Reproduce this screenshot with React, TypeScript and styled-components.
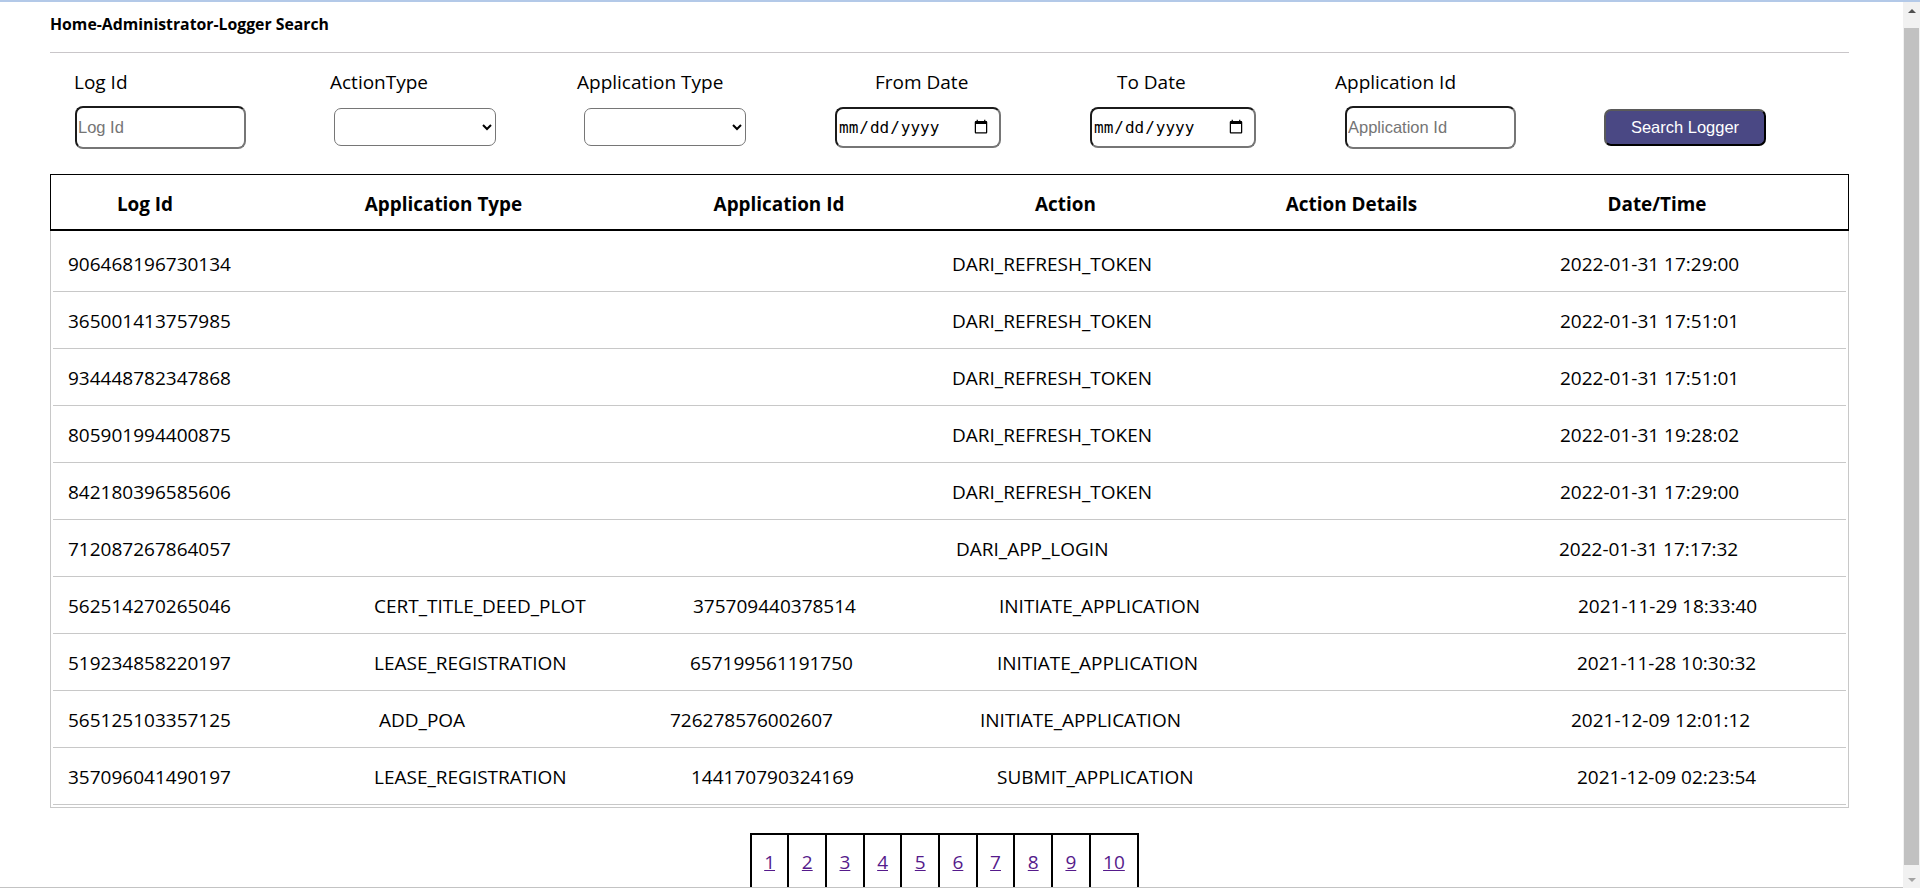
import React from "react";
import styled, { createGlobalStyle } from "styled-components";

const GlobalStyle = createGlobalStyle`
  html {
    scrollbar-width: none;
  }
  html, body {
    margin: 0;
    padding: 0;
    background: #ffffff;
  }
  body {
    font-family: "Open Sans", "Noto Sans", sans-serif;
    color: #000;
  }
  ::-webkit-scrollbar {
    display: none;
  }
`;

const TopEdge = styled.div`
  position: fixed;
  top: 0;
  left: 0;
  right: 0;
  height: 2px;
  background: #b3c9e8;
  z-index: 5;
`;

const BottomEdge = styled.div`
  position: fixed;
  bottom: 0;
  left: 0;
  right: 0;
  height: 1px;
  background: #c3c3c3;
  z-index: 5;
`;

const ScrollBar = styled.div`
  position: fixed;
  top: 2px;
  right: 0;
  bottom: 0;
  width: 17px;
  display: flex;
  flex-direction: column;
  background: #f1f1f1;
  z-index: 6;
`;

const ScrollArrow = styled.div<{ $down?: boolean }>`
  flex: 0 0 17px;
  display: flex;
  align-items: center;
  justify-content: center;
  &::before {
    content: "";
    width: 0;
    height: 0;
    border-left: 4px solid transparent;
    border-right: 4px solid transparent;
    ${(p) =>
      p.$down
        ? "border-top: 4px solid #a3a3a3;"
        : "border-bottom: 4px solid #505050;"}
  }
`;

const ScrollTrack = styled.div`
  flex: 1;
  display: flex;
  flex-direction: column;
  padding: 9px 1px 6px 1px;
`;

const ScrollThumb = styled.div`
  flex: 1;
  background: #c1c1c1;
`;

const Page = styled.div`
  padding: 0 0 14px 50px;
  width: 1799px;
`;

const Title = styled.h1`
  margin: 0;
  padding-top: 14px;
  font-size: 15.8px;
  line-height: 20px;
  font-weight: 700;
  white-space: nowrap;
`;

const Divider = styled.hr`
  margin: 18px 0 0;
  border: 0;
  height: 1px;
  background: #c9c6c9;
`;

const FilterBar = styled.div`
  display: grid;
  grid-template-columns: 256px 236px 269px 255px 245px 269px auto;
  padding-left: 24px;
  margin-top: 16px;
`;

const Field = styled.div`
  display: flex;
  flex-direction: column;
  gap: 10px;
`;

const FieldLabel = styled.label<{ $indent: number }>`
  display: block;
  height: 26px;
  padding-left: ${(p) => p.$indent}px;
  font-size: 19px;
  line-height: 26px;
  white-space: nowrap;
`;

const ControlSlot = styled.div<{ $indent: number }>`
  display: flex;
  align-items: center;
  height: 44px;
  padding-left: ${(p) => p.$indent}px;
`;

const TextInput = styled.input`
  box-sizing: border-box;
  width: 171px;
  height: 43px;
  padding: 0 1px;
  border: 2px solid;
  border-color: #1b1b1b #767676 #767676 #1b1b1b;
  border-radius: 8px;
  font-family: "Liberation Sans", Arial, sans-serif;
  font-size: 16.5px;
  color: #000;
  background: #fff;
  outline: none;
  &::placeholder {
    color: #757575;
  }
`;

const SelectBox = styled.select`
  box-sizing: border-box;
  width: 162px;
  height: 38px;
  border: 1px solid #767676;
  border-radius: 7px;
  background-color: #fff;
  font-family: "Liberation Sans", Arial, sans-serif;
  font-size: 16px;
`;

const DateInput = styled.input`
  box-sizing: border-box;
  width: 166px;
  height: 41px;
  padding: 0 8px 0 1px;
  border: 2px solid;
  border-color: #1b1b1b #767676 #767676 #1b1b1b;
  border-radius: 8px;
  font-family: "DejaVu Sans Mono", "Liberation Mono", monospace;
  font-size: 16px;
  color: #000;
  background: #fff;
`;

const SearchButton = styled.button`
  box-sizing: border-box;
  width: 162px;
  height: 37px;
  border: 2px solid;
  border-color: #5a5a5a #000 #000 #5a5a5a;
  border-radius: 7px;
  background: #4a4884;
  color: #fff;
  font-family: "Liberation Sans", Arial, sans-serif;
  font-size: 16.5px;
  cursor: pointer;
`;

const Table = styled.div`
  margin-top: 25px;
`;

const HeaderRow = styled.div`
  display: grid;
  grid-template-columns: 188px 409px 262px 311px 261px 350px 1fr;
  height: 54px;
  border: 1px solid #000;
  border-bottom-width: 2px;
`;

const HeaderCell = styled.div`
  padding-top: 17px;
  font-size: 18.9px;
  line-height: 25px;
  font-weight: 700;
  text-align: center;
  white-space: nowrap;
`;

const Body = styled.div`
  border: 1px solid #c8c8c8;
  border-top: 0;
  padding: 4px 2px 2px 2px;
`;

const Row = styled.div<{ $template: string; $offset: number }>`
  display: grid;
  grid-template-columns: ${(p) => p.$template};
  height: 56px;
  padding-left: ${(p) => p.$offset}px;
  border-bottom: 1px solid #c8c8c8;
`;

const Cell = styled.div`
  padding-top: 17px;
  font-size: 19px;
  line-height: 25px;
  white-space: nowrap;
`;

const PagerWrap = styled.div`
  display: flex;
  justify-content: center;
  margin-top: 25px;
  padding-right: 10px;
`;

const Pager = styled.div`
  display: flex;
  border: 1px solid #000;
`;

const PageCell = styled.div`
  border: 1px solid #000;
  padding: 15px 12.4px;
  font-size: 19px;
  line-height: 25px;
`;

const PageLink = styled.a`
  color: #551a8b;
  text-decoration: underline;
`;

type Filter = {
  label: string;
  labelIndent: number;
  controlIndent: number;
  kind: "text" | "select" | "date";
  placeholder?: string;
};

const filters: Filter[] = [
  { label: "Log Id", labelIndent: 0, controlIndent: 1, kind: "text", placeholder: "Log Id" },
  { label: "ActionType", labelIndent: 0, controlIndent: 4, kind: "select" },
  { label: "Application Type", labelIndent: 11, controlIndent: 18, kind: "select" },
  { label: "From Date", labelIndent: 40, controlIndent: 0, kind: "date" },
  { label: "To Date", labelIndent: 27, controlIndent: 0, kind: "date" },
  { label: "Application Id", labelIndent: 0, controlIndent: 10, kind: "text", placeholder: "Application Id" },
];

const headers = ["Log Id", "Application Type", "Application Id", "Action", "Action Details", "Date/Time"];

type LogRow = {
  cells: string[];
  x: number[];
};

const refreshX = [68, 374, 692, 952, 1300, 1560];

const rows: LogRow[] = [
  { cells: ["906468196730134", "", "", "DARI_REFRESH_TOKEN", "", "2022-01-31 17:29:00"], x: refreshX },
  { cells: ["365001413757985", "", "", "DARI_REFRESH_TOKEN", "", "2022-01-31 17:51:01"], x: refreshX },
  { cells: ["934448782347868", "", "", "DARI_REFRESH_TOKEN", "", "2022-01-31 17:51:01"], x: refreshX },
  { cells: ["805901994400875", "", "", "DARI_REFRESH_TOKEN", "", "2022-01-31 19:28:02"], x: refreshX },
  { cells: ["842180396585606", "", "", "DARI_REFRESH_TOKEN", "", "2022-01-31 17:29:00"], x: refreshX },
  { cells: ["712087267864057", "", "", "DARI_APP_LOGIN", "", "2022-01-31 17:17:32"], x: [68, 374, 692, 956, 1300, 1559] },
  {
    cells: ["562514270265046", "CERT_TITLE_DEED_PLOT", "375709440378514", "INITIATE_APPLICATION", "", "2021-11-29 18:33:40"],
    x: [68, 374, 693, 999, 1300, 1578],
  },
  {
    cells: ["519234858220197", "LEASE_REGISTRATION", "657199561191750", "INITIATE_APPLICATION", "", "2021-11-28 10:30:32"],
    x: [68, 374, 690, 997, 1300, 1577],
  },
  {
    cells: ["565125103357125", "ADD_POA", "726278576002607", "INITIATE_APPLICATION", "", "2021-12-09 12:01:12"],
    x: [68, 379, 670, 980, 1300, 1571],
  },
  {
    cells: ["357096041490197", "LEASE_REGISTRATION", "144170790324169", "SUBMIT_APPLICATION", "", "2021-12-09 02:23:54"],
    x: [68, 374, 691, 997, 1300, 1577],
  },
];

const ROW_START = 53;

function rowTemplate(x: number[]): string {
  const widths: string[] = [];
  for (let i = 0; i < x.length - 1; i++) widths.push(`${x[i + 1] - x[i]}px`);
  widths.push("1fr");
  return widths.join(" ");
}

function renderControl(f: Filter) {
  if (f.kind === "text") return <TextInput type="text" placeholder={f.placeholder} />;
  if (f.kind === "select")
    return (
      <SelectBox defaultValue="">
        <option value=""></option>
      </SelectBox>
    );
  return <DateInput type="date" />;
}

export default function App() {
  return (
    <>
      <GlobalStyle />
      <TopEdge />
      <Page>
        <Title>Home-Administrator-Logger Search</Title>
        <Divider />
        <FilterBar>
          {filters.map((f) => (
            <Field key={f.label}>
              <FieldLabel $indent={f.labelIndent}>{f.label}</FieldLabel>
              <ControlSlot $indent={f.controlIndent}>{renderControl(f)}</ControlSlot>
            </Field>
          ))}
          <Field>
            <FieldLabel $indent={0} />
            <ControlSlot $indent={0}>
              <SearchButton type="button">Search Logger</SearchButton>
            </ControlSlot>
          </Field>
        </FilterBar>
        <Table>
          <HeaderRow>
            {headers.map((h) => (
              <HeaderCell key={h}>{h}</HeaderCell>
            ))}
          </HeaderRow>
          <Body>
            {rows.map((r) => (
              <Row key={r.cells[0]} $template={rowTemplate(r.x)} $offset={r.x[0] - ROW_START}>
                {r.cells.map((c, i) => (
                  <Cell key={i}>{c}</Cell>
                ))}
              </Row>
            ))}
          </Body>
        </Table>
        <PagerWrap>
          <Pager>
            {Array.from({ length: 10 }, (_, i) => (
              <PageCell key={i}>
                <PageLink href="#">{i + 1}</PageLink>
              </PageCell>
            ))}
          </Pager>
        </PagerWrap>
      </Page>
      <BottomEdge />
      <ScrollBar>
        <ScrollArrow />
        <ScrollTrack>
          <ScrollThumb />
        </ScrollTrack>
        <ScrollArrow $down />
      </ScrollBar>
    </>
  );
}
